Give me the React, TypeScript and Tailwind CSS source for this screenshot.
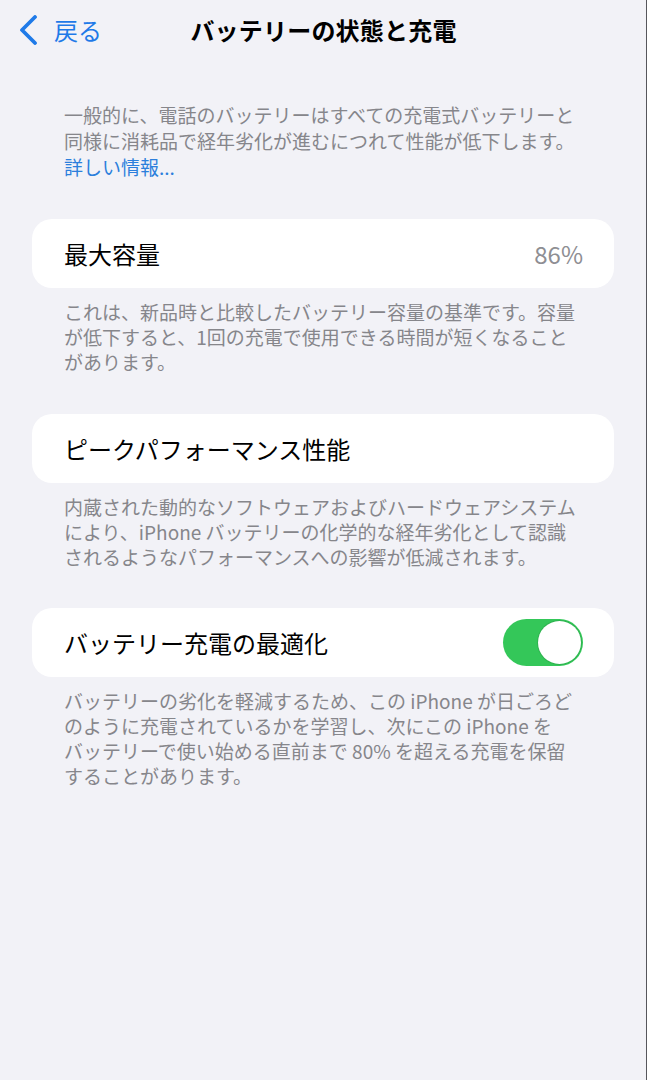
import React from "react";

const font = { fontFamily: '"Noto Sans CJK JP", "Noto Sans", sans-serif' };

function Footer({ lines }: { lines: React.ReactNode[] }) {
  return (
    <div className="px-[64px] pt-[11px] text-[19px] leading-[25px] text-[#86868b] whitespace-nowrap">
      {lines.map((l, i) => (
        <div key={i}>{l}</div>
      ))}
    </div>
  );
}

function Card({ children }: { children: React.ReactNode }) {
  return (
    <div className="mx-[32px] h-[69px] rounded-[20px] bg-white flex items-center justify-between pl-[32px] pr-[31px] text-[24px] text-black">
      {children}
    </div>
  );
}

export default function App() {
  return (
    <div
      className="w-full h-[1080px] bg-[#f2f2f7] border-r border-[#56565c] overflow-hidden"
      style={font}
    >
      {/* Header */}
      <div className="relative h-[60px] flex items-center">
        <div className="flex items-center pl-[19px] text-[#1f7ae8] text-[24px]">
          <svg width="20" height="30" viewBox="0 0 20 30" className="mr-[15px]">
            <path
              d="M16 2 L3 15 L16 28"
              fill="none"
              stroke="#1f7ae8"
              strokeWidth="3.8"
              strokeLinecap="round"
              strokeLinejoin="round"
            />
          </svg>
          <span className="leading-none">戻る</span>
        </div>
        <div className="absolute left-0 right-0 top-0 h-[60px] flex items-center justify-center pointer-events-none">
          <span className="text-[24px] font-bold text-black tracking-[0.2px] ml-[1px]">
            バッテリーの状態と充電
          </span>
        </div>
      </div>

      {/* Intro */}
      <div className="px-[64px] pt-[42px] text-[19px] leading-[26px] text-[#86868b] whitespace-nowrap">
        <div>一般的に、電話のバッテリーはすべての充電式バッテリーと</div>
        <div>同様に消耗品で経年劣化が進むにつれて性能が低下します。</div>
        <div className="text-[#2c7fdc]">詳しい情報...</div>
      </div>

      <div className="h-[39px]" />

      <Card>
        <span>最大容量</span>
        <span className="text-[#8e8e93]">86%</span>
      </Card>
      <Footer
        lines={[
          "これは、新品時と比較したバッテリー容量の基準です。容量",
          "が低下すると、1回の充電で使用できる時間が短くなること",
          "があります。",
        ]}
      />

      <div className="h-[40px]" />

      <Card>
        <span>ピークパフォーマンス性能</span>
      </Card>
      <Footer
        lines={[
          "内蔵された動的なソフトウェアおよびハードウェアシステム",
          "により、iPhone バッテリーの化学的な経年劣化として認識",
          "されるようなパフォーマンスへの影響が低減されます。",
        ]}
      />

      <div className="h-[39px]" />

      <Card>
        <span>バッテリー充電の最適化</span>
        <div className="w-[80px] h-[47px] rounded-full bg-[#34c759] flex items-center justify-end pr-[2px]">
          <div className="w-[43px] h-[43px] rounded-full bg-white shadow-[0_0_0_1px_rgba(40,160,70,0.5)]" />
        </div>
      </Card>
      <Footer
        lines={[
          "バッテリーの劣化を軽減するため、この iPhone が日ごろど",
          "のように充電されているかを学習し、次にこの iPhone を",
          "バッテリーで使い始める直前まで 80% を超える充電を保留",
          "することがあります。",
        ]}
      />
    </div>
  );
}
